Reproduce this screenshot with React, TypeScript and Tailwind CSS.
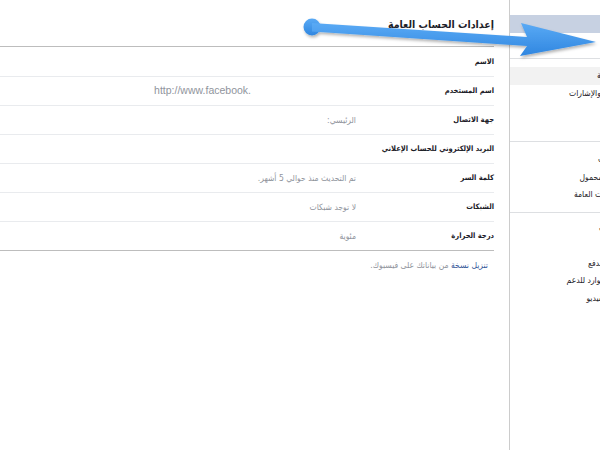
import React from "react";

const rows: { label: string; value?: React.ReactNode }[] = [
  { label: "الاسم" },
  {
    label: "اسم المستخدم",
    value: (
      <span dir="ltr" className="mr-[105px] font-['Liberation_Sans',sans-serif] text-[10.5px]">
        http://www.facebook.
      </span>
    ),
  },
  { label: "جهة الاتصال", value: "الرئيسي:" },
  { label: "البريد الإلكتروني للحساب الإعلاني" },
  { label: "كلمة السر", value: "تم التحديث منذ حوالي 5 أشهر." },
  { label: "الشبكات", value: "لا توجد شبكات" },
  { label: "درجة الحرارة", value: "مئوية" },
];

const sections: { items: string[]; pt: string; pb: string }[] = [
  { items: ["عام", "الأمان"], pt: "pt-[15px]", pb: "pb-[8px]" },
  {
    items: ["الخصوصية", "اليوميات والإشارات", "الحظر", "اللغة"],
    pt: "pt-[8px]",
    pb: "pb-[4px]",
  },
  {
    items: ["الإشعارات", "الهاتف المحمول", "المنشورات العامة"],
    pt: "pt-[9px]",
    pb: "pb-[8px]",
  },
  {
    items: ["التطبيقات", "الإعلانات", "عمليات الدفع", "صندوق الوارد للدعم", "مقاطع الفيديو"],
    pt: "pt-[7px]",
    pb: "pb-[8px]",
  },
];

function Arrow() {
  return (
    <svg
      className="absolute left-0 top-0 pointer-events-none"
      width="600"
      height="80"
      viewBox="0 0 600 80"
    >
      <defs>
        <linearGradient id="arrowFill" x1="0" y1="0" x2="0" y2="1">
          <stop offset="0" stopColor="#5aaaf5" />
          <stop offset="1" stopColor="#2f86e0" />
        </linearGradient>
        <filter id="arrowShadow" x="-10%" y="-50%" width="120%" height="200%">
          <feDropShadow dx="1" dy="2" stdDeviation="1.5" floodColor="#000" floodOpacity="0.3" />
        </filter>
      </defs>
      <g filter="url(#arrowShadow)" fill="url(#arrowFill)">
        <circle cx="312" cy="27" r="8.5" />
        <polygon points="312,23 527,37 521,23 596,42 520,56 527,46 312,31.5" />
      </g>
    </svg>
  );
}

export default function App() {
  return (
    <div
      dir="ltr"
      className="relative w-[600px] h-[450px] overflow-hidden bg-white flex font-['DejaVu_Sans_Condensed','DejaVu_Sans',sans-serif]"
    >
      {/* Main settings panel */}
      <div dir="rtl" className="w-[509px] shrink-0 pr-[15px] pl-0">
        <div className="h-[46px] flex items-center">
          <h2 className="text-[10.5px] font-bold text-[#1d2129] pt-[4px] whitespace-nowrap">
            إعدادات الحساب العامة
          </h2>
        </div>
        <div className="border-t border-b border-[#bdbdbd]">
          {rows.map((row, i) => (
            <div
              key={row.label}
              className={`flex items-center h-[29px] ${
                i > 0 ? "border-t border-[#e9ebee]" : ""
              }`}
            >
              <div className="w-[138px] shrink-0 whitespace-nowrap text-[7.5px] font-bold text-[#1d2129]">
                {row.label}
              </div>
              <div className="flex-1 whitespace-nowrap text-[8.5px] text-[#90949c]">
                {row.value}
              </div>
            </div>
          ))}
        </div>
        <div className="pt-[8px] pr-[6px] whitespace-nowrap text-[8.5px] text-[#90949c]">
          <span className="text-[#365899]">تنزيل نسخة</span> من بياناتك على فيسبوك.
        </div>
      </div>

      {/* Sidebar nav */}
      <div className="w-[145px] shrink-0 border-l border-[#cccccc] h-full" dir="rtl">
        {sections.map((s, si) => (
          <div
            key={si}
            className={`${s.pt} ${s.pb} ${si > 0 ? "border-t border-[#dddfe2]" : ""}`}
          >
            {s.items.map((item, ii) => (
              <div
                key={item}
                className={`h-[17.5px] flex items-center pr-[24px] whitespace-nowrap text-[8.5px] text-[#1d2129] ${
                  si === 0 && ii === 0 ? "bg-[#c7d1e2]" : ""
                } ${si === 1 && ii === 0 ? "bg-[#f2f2f2]" : ""}`}
              >
                {item}
              </div>
            ))}
          </div>
        ))}
      </div>

      <Arrow />
    </div>
  );
}
